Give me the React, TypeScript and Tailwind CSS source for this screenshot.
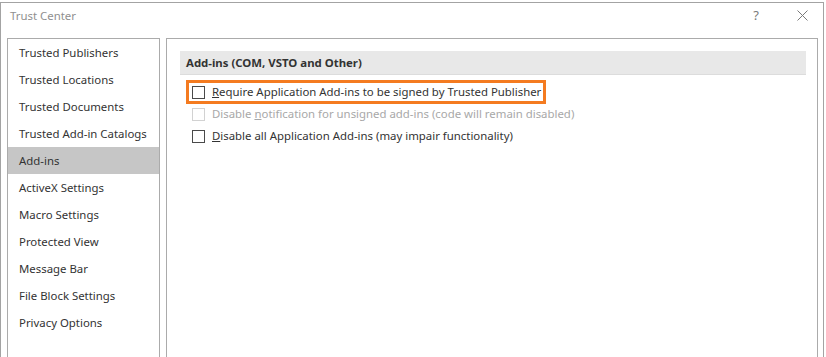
import React from "react";

const navItems = [
  "Trusted Publishers",
  "Trusted Locations",
  "Trusted Documents",
  "Trusted Add-in Catalogs",
  "Add-ins",
  "ActiveX Settings",
  "Macro Settings",
  "Protected View",
  "Message Bar",
  "File Block Settings",
  "Privacy Options",
];

function Box({ disabled }: { disabled?: boolean }) {
  return (
    <span
      className={
        "block w-[13px] h-[13px] shrink-0 bg-white border " +
        (disabled ? "border-[#d2d2d2]" : "border-[#4a4a4a]")
      }
    />
  );
}

export default function App() {
  return (
    <div
      className="w-[826px] h-[357px] bg-white overflow-hidden"
      style={{ fontFamily: '"Noto Sans", "Open Sans", sans-serif' }}
    >
      <div className="h-[2px] bg-white" />
      <div className="w-[824px] h-[355px] border-l border-r border-t border-[#a3a3a3] flex flex-col">
        {/* title bar */}
        <div className="h-[25px] flex items-center shrink-0">
          <span className="ml-[9px] text-[11.4px] text-[#8f8f8f] leading-none">Trust Center</span>
          <span className="ml-auto mr-[38px] text-[13px] text-[#7a7a7a] leading-none">?</span>
          <svg width="11" height="11" viewBox="0 0 11 11" className="mr-[15px]">
            <path d="M0.5 0.5 L10.5 10.5 M10.5 0.5 L0.5 10.5" stroke="#7a7a7a" strokeWidth="1" />
          </svg>
        </div>
        <div className="h-[10px] shrink-0" />
        {/* body */}
        <div className="flex flex-1 pl-[6px] gap-[6px]">
          <div className="w-[153px] border-l border-r border-t border-[#ababab] flex flex-col">
            {navItems.map((t) => (
              <div
                key={t}
                className={
                  "h-[27px] flex items-center pl-[11px] text-[11.4px] text-[#333333] " +
                  (t === "Add-ins" ? "bg-[#c6c6c6]" : "")
                }
              >
                {t}
              </div>
            ))}
          </div>
          <div className="w-[652px] border-l border-r border-t border-[#ababab] pt-[12px] pl-[13px] pr-[11px]">
            <div className="h-[24px] bg-[#e8e8e8] border-b border-[#dcdcdc] flex items-center pl-[6px] text-[11.4px] font-bold text-[#333333]">
              Add-ins (COM, VSTO and Other)
            </div>
            <div className="mt-[6px] flex flex-col">
              <div className="relative h-[22px] flex items-center pl-[12px] gap-[7px] text-[11.4px] text-[#333333]">
                <span className="absolute left-[6px] top-[-1px] w-[360px] h-[24px] border-[3px] border-[#f47b20]" />
                <Box />
                <span>
                  <span className="underline">R</span>equire Application Add-ins to be signed by Trusted Publisher
                </span>
              </div>
              <div className="h-[22px] flex items-center pl-[12px] gap-[7px] text-[11.4px] text-[#a8a8a8]">
                <Box disabled />
                <span>
                  Disable <span className="underline">n</span>otification for unsigned add-ins (code will remain disabled)
                </span>
              </div>
              <div className="h-[22px] flex items-center pl-[12px] gap-[7px] text-[11.4px] text-[#333333]">
                <Box />
                <span>
                  <span className="underline">D</span>isable all Application Add-ins (may impair functionality)
                </span>
              </div>
            </div>
          </div>
        </div>
      </div>
    </div>
  );
}
